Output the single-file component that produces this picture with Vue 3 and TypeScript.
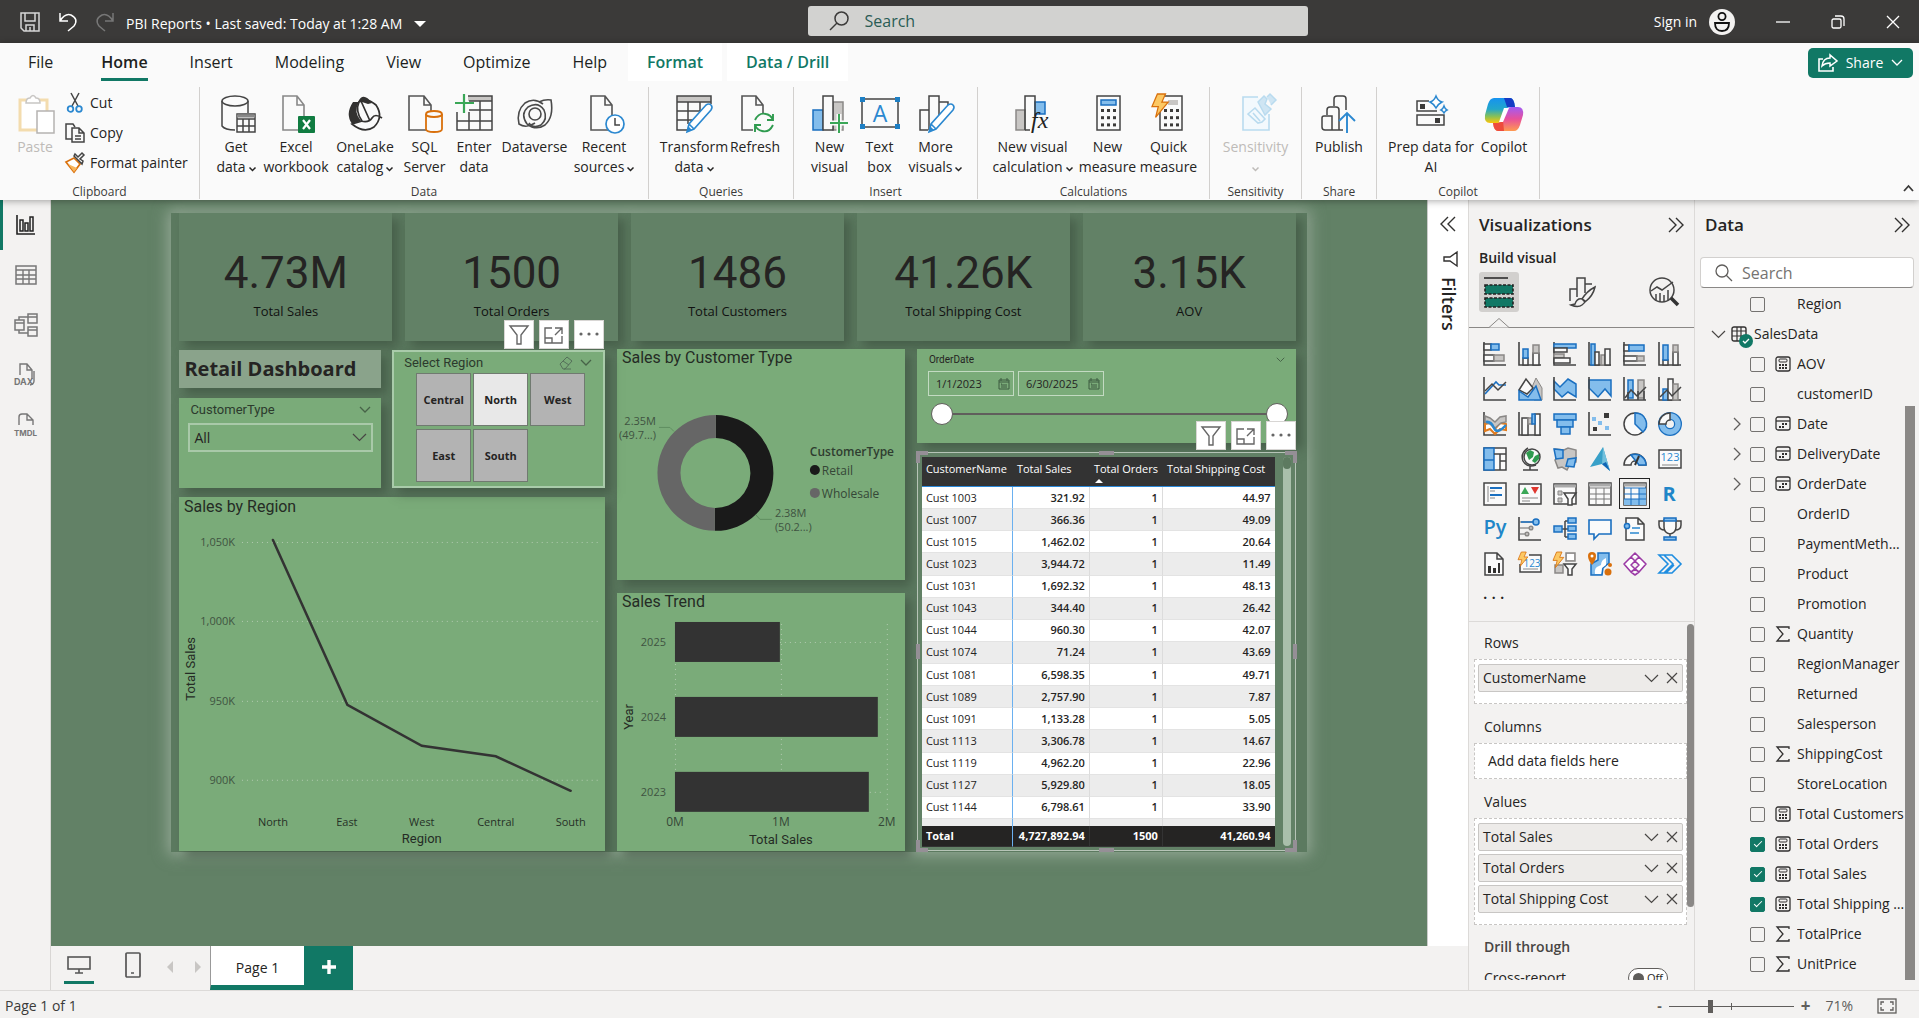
<script setup lang="ts">
import { h, ref } from 'vue'

const K = '#444'
const B = '#1a6fc0'
const L = '#83bdec'
const G = '#c8c6c4'
const axis = `<path d="M1 0v23h22" fill="none" stroke="${K}" stroke-width="1.6"/>`
const k = `fill="#fafafa" stroke="${K}" stroke-width="1.5"`
const b = `fill="${L}" stroke="${B}" stroke-width="1.5"`
const g = `fill="${G}" stroke="#8a8886" stroke-width="1.5"`
const n = `fill="none" stroke="${K}" stroke-width="1.5"`
const page = `<path d="M7 2h14l7 9v25H7z M21 2v9h7" fill="#fafafa" stroke="#555" stroke-width="1.6"/>`
const pencil = `<path d="M13 38l2-8 17-19q3-2 5 0t0 5L20 35z M15 30l5 5" fill="#fff" stroke="#2b88d0" stroke-width="1.6"/><path d="M13 38l1-6 4 4z" fill="#2b88d0"/>`
const bolt = (x: number, y: number, s: number) =>
  `<path transform="translate(${x} ${y}) scale(${s})" d="M6 0h9l-4 9h7L4 26l3-12H0z" fill="#fcc863" stroke="#d9700c" stroke-width="1.4"/>`
const calcKeys = (x: number, y: number, s: number) => {
  let out = ''
  for (let r = 0; r < 3; r++) for (let c = 0; c < 3; c++) out += `<rect x="${x + c * s * 1.5}" y="${y + r * s * 1.8}" width="${s - 1}" height="${s - 1}" fill="#3b3a39"/>`
  return out
}

type Glyph = [number, number, string]
const icons: Record<string, Glyph> = {
  save: [20, 20, `<path d="M1 1h18v18H4l-3-3z M5 1v8h10V1 M6 19v-6h8v6 M10 15v4" fill="none" stroke="#d6d6d6" stroke-width="1.5"/>`],
  undo: [18, 20, `<path d="M1 1v8h8 M1 9q5-8 11-6 8 4 3 11l-6 5" fill="none" stroke="#fff" stroke-width="1.5"/>`],
  redo: [18, 20, `<path d="M17 1v8H9 M17 9Q12 1 6 3q-8 4-3 11l6 5" fill="none" stroke="#777" stroke-width="1.5"/>`],
  caret: [12, 6, `<path d="M0 0h12L6 6z" fill="#fff"/>`],
  lens: [20, 20, `<circle cx="12.500" cy="7.500" r="6.500" fill="none" stroke="#3b3a39" stroke-width="1.5"/><path d="M8 12l-7 7" stroke="#3b3a39" stroke-width="1.5"/>`],
  lens2: [18, 18, `<circle cx="7" cy="7" r="6" fill="none" stroke="#605e5c" stroke-width="1.3"/><path d="M11 11l6 6" stroke="#605e5c" stroke-width="1.3"/>`],
  user: [26, 26, `<circle cx="13" cy="13" r="13" fill="#f3f2f1"/><circle cx="13" cy="7.500" r="3.600" fill="none" stroke="#111" stroke-width="1.800"/><path d="M6 14h14q0 8-7 8t-7-8z" fill="none" stroke="#111" stroke-width="1.800"/>`],
  min: [14, 14, `<path d="M0 7h14" stroke="#fff" stroke-width="1.300"/>`],
  restore: [14, 14, `<rect x="1" y="4" width="9" height="9" rx="1.500" fill="none" stroke="#fff" stroke-width="1.300"/><path d="M4 1h6q3 0 3 3v7" fill="none" stroke="#fff" stroke-width="1.300"/>`],
  close: [14, 14, `<path d="M1 1l12 12M13 1L1 13" stroke="#fff" stroke-width="1.300"/>`],
  share: [20, 18, `<path d="M5 5H1v12h14v-4" fill="none" stroke="#fff" stroke-width="1.600"/><path d="M4 12q1-8 8-8V1l7 6-7 5V9q-5 0-8 3z" fill="none" stroke="#fff" stroke-width="1.500"/>`],
  down: [12, 8, `<path d="M1 1l5 5 5-5" fill="none" stroke="currentColor" stroke-width="1.300"/>`],
  smalldown: [7, 5, `<path d="M.5.5l3 3 3-3" fill="none" stroke="currentColor" stroke-width="1.500"/>`],
  up: [11, 7, `<path d="M1 6l4.500-5L10 6" fill="none" stroke="#3b3a39" stroke-width="1.800"/>`],
  right: [8, 14, `<path d="M1 1l6 6-6 6" fill="none" stroke="#605e5c" stroke-width="1.300"/>`],
  wide: [15, 9, `<path d="M1 1l6.500 6.500L14 1" fill="none" stroke="#484644" stroke-width="1.200"/>`],
  x: [12, 12, `<path d="M1 1l10 10M11 1L1 11" stroke="#484644" stroke-width="1.200"/>`],
  dright: [16, 16, `<path d="M1 1l7 7-7 7M8 1l7 7-7 7" fill="none" stroke="#323130" stroke-width="1.400"/>`],
  dleft: [16, 16, `<path d="M8 1L1 8l7 7M15 1L8 8l7 7" fill="none" stroke="#323130" stroke-width="1.400"/>`],
  sidefilter: [15, 16, `<path d="M14 1v14L7 10H1V6h6z" fill="none" stroke="#323130" stroke-width="1.400"/>`],

  paste: [40, 40, `<path d="M5 6h27v30H5z" fill="#fff" stroke="#f3dcae" stroke-width="3"/><path d="M11 9q0-5 4-5 3-5 6 0 4 0 4 5z" fill="#fff" stroke="#c8c6c4" stroke-width="1.500"/><rect x="22" y="17" width="17" height="22" fill="#fff" stroke="#b5b3b1" stroke-width="1.500"/>`],
  cut: [20, 20, `<path d="M6 0l7 13M14 0L7 13" stroke="${K}" stroke-width="1.500"/><circle cx="5.500" cy="16" r="2.800" fill="none" stroke="#2b88d0" stroke-width="1.800"/><circle cx="14" cy="16" r="2.800" fill="none" stroke="#2b88d0" stroke-width="1.800"/>`],
  copy: [20, 20, `<path d="M7 16H1V1h7l2 3" ${n}/><path d="M7 5h7l5 5v9H7z M14 5v5h5 M10 13h6M10 16h6" ${k}/>`],
  painter: [20, 20, `<path d="M9 5l6 6-6 8L1 9z" fill="#fff" stroke="#d9700c" stroke-width="1.700"/><path d="M3 11l9 4-3 4z" fill="#f7b55c"/><path d="M9 3l8 8 1-3-3-2 4-4-2-2-4 4-3-3z" ${k}/>`],
  getdata: [40, 40, `<path d="M6 7v25q3 4 13 4M32 7v12" ${n}/><ellipse cx="19" cy="7" rx="13" ry="5" ${k}/><rect x="21" y="20" width="18" height="18" ${k}/><path d="M21 22h18" stroke="#888" stroke-width="3"/><path d="M21 25h18M21 32h18M27 25v13M33 25v13" ${n}/>`],
  excel: [40, 40, page.replace('#555', '#888') + `<rect x="22" y="22" width="17" height="17" rx="1" fill="#107c41"/><path d="M27 26l7 9M34 26l-7 9" stroke="#fff" stroke-width="2.200"/>`],
  onelake: [40, 40, `<path d="M8 8Q0 20 7 30l9-3Q8 18 14 8z M13 8q5-11 14 1 l-4 1-6-2z" fill="#323130"/><path d="M14 8q8-5 17 3 8 12-2 22-10 7-22-3l10-3q-7-10-3-19z M16 7l9 20 M16 27q8 2 11-3t10 0" fill="none" stroke="#323130" stroke-width="1.700"/>`],
  sql: [40, 40, `<path d="M4 2h15l7 9v25H4z M19 2v9h7" fill="#fafafa" stroke="#555" stroke-width="1.600"/><path d="M21 20v15q0 3 8 3t8-3V20" fill="#fafafa" stroke="#d9700c" stroke-width="1.800"/><ellipse cx="29" cy="20" rx="8" ry="3" fill="#fafafa" stroke="#d9700c" stroke-width="1.800"/>`],
  enter: [40, 40, `<rect x="14" y="2" width="24" height="5" fill="${G}"/><path d="M14 2h24v34H3V18 M3 27h35M15 16h23M15 7h23M15 18v18M26 7v29" ${n}/><path d="M1 9h19M10 0v19" stroke="#3aa757" stroke-width="2.200"/>`],
  dataverse: [40, 40, `<path d="M28 10q-9-7-18-1Q1 17 4 30q7 5 16-1 M12 30q9 7 18 1 9-8 6-25-6-1-12 2" fill="none" stroke="#4a4a4a" stroke-width="1.600"/><circle cx="20" cy="20" r="6" fill="none" stroke="#4a4a4a" stroke-width="1.600"/><path d="M12 30Q5 20 13 13q10-6 16 3 4 9-3 15-8 4-12-2" fill="none" stroke="#4a4a4a" stroke-width="1.600"/>`],
  recent: [40, 40, page + `<circle cx="31" cy="30" r="9" fill="#fff" stroke="#2b88d0" stroke-width="1.700"/><path d="M31 24v7h5" ${n}/>`],
  transform: [40, 40, `<rect x="3" y="2" width="34" height="6" fill="${G}"/><path d="M37 10V2H3v34h11 M3 8h34M3 17h24M3 26h16M14 8v22M26 8v9" ${n}/>` + pencil],
  refresh: [40, 40, page + `<rect x="18" y="19" width="22" height="21" fill="#fafafa"/><path d="M20 26q4-8 11-6 5 1 7 6M38 20v6h-6M38 31q-4 8-11 6-5-1-7-6M20 38v-7h6" fill="none" stroke="#2f9b4f" stroke-width="1.900"/>`],
  newvisual: [40, 40, `<rect x="3" y="16" width="10" height="20" ${b}/><rect x="23" y="8" width="10" height="28" ${g}/><rect x="13" y="2" width="10" height="34" ${k}/><path d="M20 29h18M29 20v19" stroke="#fafafa" stroke-width="5"/><path d="M20 29h18M29 20v19" stroke="#3aa757" stroke-width="2"/>`],
  textbox: [40, 40, `<rect x="2" y="5" width="36" height="28" ${n}/><g fill="#1e7fc4"><rect y="3" width="5" height="5"/><rect x="35" y="3" width="5" height="5"/><rect y="30" width="5" height="5"/><rect x="35" y="30" width="5" height="5"/></g><text x="20" y="28" text-anchor="middle" font-size="23" font-family="Open Sans, sans-serif" fill="#2b88d0">A</text>`],
  morevisuals: [40, 40, `<path d="M12 36H4V16h9" ${n}/><path d="M23 8h9v6" ${n}/><path d="M13 36V2h10v24" ${n}/>` + pencil],
  calcvisual: [40, 40, `<rect x="3" y="16" width="9" height="20" ${g}/><rect x="22" y="8" width="10" height="12" ${b}/><path d="M12 36V2h10v20" ${n}/><path d="M12 36h5" ${n}/><text x="18" y="34" font-size="24" font-style="italic" font-family="Liberation Serif, serif" fill="#222">fx</text>`],
  measure: [40, 40, `<rect x="9" y="2" width="23" height="34" ${k}/><rect x="13" y="6" width="15" height="5" ${b}/>` + calcKeys(13, 15, 4)],
  quick: [40, 40, `<rect x="11" y="2" width="22" height="34" ${k}/><rect x="19" y="6" width="10" height="5" fill="${G}"/>` + calcKeys(15, 15, 4) + bolt(3, 0, 0.9)],
  sensitivity: [40, 40, `<path d="M22 3H7v33h26V20" fill="#f3f9fd" stroke="#b9dbef" stroke-width="1.600"/><path d="M12 20l7-6 10 11-3 3-4 1z M17 19l7 8" fill="none" stroke="#b9dbef" stroke-width="1.600"/><path d="M22 8l6-6 3 3-2 5 6 5-6 6zM31 3l3-3 6 6-5 5" fill="#cfe5f3" stroke="#b9dbef" stroke-width="1.500"/>`],
  publish: [40, 40, `<path d="M15 36h-9q-3 0-3-3V24q0-2 2-2h8v14 M8 21v-5q0-3 3-3h6q3 0 3 3v20h-6 M15 12V5q0-3 3-3h6q3 0 3 3v11 M20 30v6h4" ${n}/><path d="M28 39V20M20 27l8-8 8 8" fill="none" stroke="#2b88d0" stroke-width="1.900"/>`],
  prep: [40, 40, `<path d="M18 7H6v10h20 M6 21h27v10H6z" ${n}/><rect x="9" y="10" width="5" height="5" fill="#3b3a39"/><rect x="24" y="24" width="5" height="5" fill="#3b3a39"/><path d="M25 2q2 5 6 6-4 2-6 6-2-4-6-6 4-1 6-6z M33 12q1 3 3 4-2 1-3 3-1-2-3-3 2-1 3-4z" fill="#fff" stroke="#2b88d0" stroke-width="1.500"/>`],
  copilot: [40, 40, `<defs><linearGradient id="ca" x1="0" y1="0" x2="0" y2="1"><stop offset="0" stop-color="#1692f0"/><stop offset=".45" stop-color="#23a7c9"/><stop offset=".75" stop-color="#8cc152"/><stop offset="1" stop-color="#fdc50a"/></linearGradient><linearGradient id="cb" x1="0" y1="0" x2="0" y2="1"><stop offset="0" stop-color="#a15bf5"/><stop offset=".5" stop-color="#e8509a"/><stop offset="1" stop-color="#ff9a4f"/></linearGradient></defs><path d="M10 4h16q4 0 5 9h-5q-4 0-6 7l-2 7q-1 2-4 2H6q-6 0-5-8L4 10q2-6 6-6z" fill="url(#ca)"/><path d="M20 4h6q4 0 5 9h-8z" fill="#153bc4"/><path d="M30 37H14q-4 0-5-8h5q4 0 6-7l3-7q1-2 4-2h7q6 0 5 8l-3 10q-2 6-6 6z" fill="url(#cb)"/><path d="M20 37h-6q-4 0-5-8h5q3 0 5-3z" fill="#ee4c3c"/><path d="M20 14h5l-6 14h-4z" fill="#fff"/>`],

  report: [20, 20, `<path d="M1 0v19h18" fill="none" stroke="#222" stroke-width="1.600"/><path d="M4 5h3v11H4zM9 8h3v8H9zM14 2h3v14h-3z" fill="none" stroke="#222" stroke-width="1.500"/>`],
  table: [22, 20, `<rect x="1" y="1" width="20" height="18" fill="none" stroke="#777" stroke-width="1.500"/><path d="M1 5h20M1 10h20M1 14h20M8 5v14M14 5v14" stroke="#777" stroke-width="1.400"/>`],
  model: [24, 24, `<path d="M14 1h9v9h-9zM14 14h9v9h-9zM1 7h9v10H1z M14 4h9M14 17h9M1 10h9 M5 7V4h9 M5 17v3h9" fill="none" stroke="#777" stroke-width="1.500"/>`],
  dax: [24, 24, `<path d="M6 12V1h7l5 6v9 M13 1v6h5 M20 8v10q0 3-4 4" fill="none" stroke="#777" stroke-width="1.400"/><text x="0" y="22" font-size="9" font-weight="700" font-family="Inter, sans-serif" fill="#777">DAX</text>`],
  tmdl: [24, 24, `<path d="M5 12V4q0-3 3-3h5l6 6v5 M13 1v6h6" fill="none" stroke="#777" stroke-width="1.400"/><text x="0" y="23" font-size="8" font-weight="700" font-family="Inter, sans-serif" fill="#777">TMDL</text>`],
  funnelbtn: [20, 20, `<path d="M1 1h18L12 10v9H8v-9z" fill="none" stroke="#666" stroke-width="1.400"/>`],
  focus: [20, 20, `<path d="M8 3H1v15h17v-7 M1 13h7v5 M11 3h7v6 M18 3l-7 7" fill="none" stroke="#666" stroke-width="1.400"/>`],
  dots: [20, 20, `<g fill="#666"><circle cx="2" cy="9" r="1.600"/><circle cx="10" cy="9" r="1.600"/><circle cx="18" cy="9" r="1.600"/></g>`],
  eraser: [14, 14, `<path d="M1 8l7-7 5 4-7 8H4z M4 5l6 4 M5 13h7" fill="none" stroke="#55705a" stroke-width="1"/>`],
  cal: [12, 12, `<path d="M1 2h10v9H1zM1 4h10M3 0v3M9 0v3" fill="none" stroke="#3d5a41" stroke-width="1"/><path d="M3 6h1v4M6 6v4M8 6v4" fill="none" stroke="#3d5a41"/>`],

  build: [32, 32, `<path d="M1 2h24" stroke="#222" stroke-width="1.500"/><rect x="2" y="9" width="28" height="9" fill="#117865" stroke="#222" stroke-width="1.600" stroke-dasharray="3 1.500"/><rect x="2" y="22" width="28" height="9" fill="#117865" stroke="#222" stroke-width="1.600" stroke-dasharray="3 1.500"/>`],
  brush: [28, 32, `<path d="M2 25V13h7M9 21V2h8v15M17 8h7" ${n}/><path d="M27 11q-8 4-13 12l3 3q8-6 10-15z M14 23q-5-1-7 5l-4 1q7 3 11 0 3-2 3-4z" fill="#f3f2f1" stroke="${K}" stroke-width="1.500"/>`],
  analytics: [32, 32, `<circle cx="14" cy="14" r="12" ${n}/><path d="M3 15l6-4 5 3 11-8M8 25v-7M12 26v-9M16 26v-7M20 24V14" ${n}/><path d="M23 22l7 7" stroke="#333" stroke-width="3.500"/>`],

  v1: [24, 24, axis + `<rect x="1" y="2" width="7" height="6" ${k}/><rect x="8" y="2" width="8" height="6" ${b}/><rect x="1" y="13" width="10" height="6" ${k}/><rect x="11" y="13" width="10" height="6" ${g}/>`],
  v2: [24, 24, axis + `<rect x="5" y="16" width="5" height="7" ${k}/><rect x="5" y="7" width="5" height="9" ${b}/><rect x="15" y="11" width="6" height="12" ${k}/><rect x="15" y="3" width="6" height="8" ${g}/>`],
  v3: [24, 24, axis + `<rect x="1" y="2" width="22" height="4" ${b}/><rect x="1" y="6" width="13" height="4" ${k}/><rect x="1" y="12" width="10" height="4" ${g}/><rect x="1" y="16" width="16" height="5" ${k}/>`],
  v4: [24, 24, axis + `<rect x="3" y="2" width="4" height="21" ${b}/><rect x="7" y="10" width="4" height="13" ${k}/><rect x="13" y="13" width="4" height="10" ${g}/><rect x="17" y="7" width="5" height="16" ${k}/>`],
  v5: [24, 24, axis + `<rect x="1" y="3" width="5" height="6" ${k}/><rect x="6" y="3" width="15" height="6" ${b}/><rect x="1" y="14" width="13" height="5" ${k}/><rect x="14" y="14" width="7" height="5" ${g}/>`],
  v6: [24, 24, axis + `<rect x="5" y="18" width="5" height="5" ${k}/><rect x="5" y="3" width="5" height="15" ${b}/><rect x="15" y="10" width="5" height="13" ${k}/><rect x="15" y="3" width="5" height="7" ${g}/>`],
  v7: [24, 24, axis + `<path d="M2 17L13 5l3 3h7" fill="none" stroke="${B}" stroke-width="1.600"/><path d="M2 14l7-7 6 6 8-8" ${n}/>`],
  v8: [24, 24, `<path d="M14 10l4-9 6 10v12h-8z" fill="${G}" stroke="#8a8886"/><path d="M1 13L8 2l7 9-6 6z" ${k}/><path d="M1 14l9 6 8-11 5 14H1z" ${b}/>`],
  v9: [24, 24, `<path d="M1 4l6 6 8-8 8 5v13l-8-5-6 5-8-8z" ${b}/>` + axis],
  v10: [24, 24, `<path d="M1 3h22v16l-6-7-7 8-9-9z" ${b}/>` + axis],
  v11: [24, 24, axis + `<rect x="5" y="3" width="5" height="18" ${b}/><rect x="15" y="3" width="6" height="18" ${g}/><path d="M5 23v-8M15 23v-9M21 23v-9" ${n}/><path d="M2 21l6-8 6 6 9-9" ${n}/>`],
  v12: [24, 24, axis + `<rect x="5" y="12" width="5" height="11" ${b}/><rect x="10" y="2" width="5" height="21" ${k}/><rect x="15" y="7" width="5" height="16" ${g}/><path d="M2 20l7-7 5 6 9-9" ${n}/>`],
  v13: [24, 24, axis + `<path d="M2 12l5-1 5 6 5-6 6 1v6l-6-1-5 5-5-5-5 2z" fill="#fff" stroke="#e07a1c" stroke-width="2"/><path d="M2 4l5 2 5 4 5-5 6-1v6l-5 1-6 5-5-4-5-2z" ${g}/><path d="M3 10q5-1 8 6t12-3" fill="none" stroke="#2b88d0" stroke-width="2.500"/>`],
  v14: [24, 24, axis + `<path d="M4 6h6v17H4zM17 2h5v21h-5z" ${k}/><rect x="10" y="6" width="4" height="6" ${g}/><rect x="14" y="2" width="3" height="10" ${b}/>`],
  v15: [24, 24, `<rect x="1" y="2" width="22" height="6" ${b}/><rect x="4" y="8" width="16" height="7" ${b}/><rect x="8" y="15" width="9" height="7" ${b}/>`],
  v16: [24, 24, axis + `<path d="M16 1h5v5h-5zM5 15h4v4H5z" fill="#3b3a39"/><path d="M4 5h4v4H4zM10 9h4v4h-4zM17 14h4v4h-4z" fill="${L}"/>`],
  v17: [24, 24, `<circle cx="12" cy="12" r="11" ${k}/><path d="M12 12V1a11 11 0 0 1 8 19z" ${b}/>`],
  v18: [24, 24, `<circle cx="12" cy="12" r="8" fill="none" stroke="${B}" stroke-width="8"/><circle cx="12" cy="12" r="8" fill="none" stroke="${L}" stroke-width="5.500"/><path d="M1 12A11 11 0 0 1 12 1v7a4 4 0 0 0-4 4z" ${k}/>`],
  v19: [24, 24, `<rect x="1" y="1" width="22" height="22" ${k}/><path d="M1 1h10v22H1zM1 13h10" ${b}/><path d="M11 7h12M17 7v16M17 14h6" ${n}/>`],
  v20: [24, 24, `<circle cx="14" cy="10" r="8" ${k}/><path d="M8 6l4-3 4 2-1 5-4 3zM17 9l4-2v5l-4 4-3-2z" fill="#2f9b4f"/><path d="M10 1Q2 6 5 14q4 7 13 4M12 19v4M5 23h15" ${n}/>`],
  v21: [24, 24, `<path d="M2 2l9 1 4-2 8 2v12l-6 2-3 6-5-3-4 1-3-8 2-3z" ${g}/><path d="M1 2l9 1v8l-7 1zM15 12l8-1-2 9-8-1z" ${b}/>`],
  v22: [24, 24, `<path d="M15 0l7 24-8-7-12 3z" fill="#38a0c8"/><path d="M15 0l7 24-8-7z" fill="#72c0dc"/><path d="M14 17l8 7-4-9z" fill="#1065b5"/>`],
  v23: [24, 24, `<path d="M1 18A11 11 0 0 1 23 18h-7a4 4 0 0 0-8 0z" ${k}/><path d="M8 8a11 11 0 0 1 15 10h-7z" ${b}/><path d="M12 18l4-9" stroke="#333" stroke-width="2"/>`],
  v24: [24, 24, `<rect x="1" y="3" width="22" height="18" ${k}/><text x="12" y="14" text-anchor="middle" font-size="11" font-family="Open Sans, sans-serif" fill="#2b88d0">123</text><path d="M4 18h16" stroke="#888"/>`],
  v25: [24, 24, `<rect x="1" y="1" width="22" height="22" ${k}/><path d="M5 4v16" stroke="#888"/><path d="M7 6h12M7 13h12" stroke="${B}" stroke-width="2"/><path d="M7 9h5M7 16h5" stroke="#888"/>`],
  v26: [24, 24, `<rect x="1" y="2" width="22" height="20" ${k}/><path d="M3 12l4-7 4 7z" fill="#3aa757"/><path d="M13 5h8l-4 7z" fill="#e0372f"/><path d="M4 16h16M4 19h8" stroke="#888"/>`],
  v27: [24, 24, `<path d="M1 2h22v20H1z" ${k}/><path d="M1 4h22" stroke="#aaa" stroke-width="3"/><path d="M5 9h4v4H5zM5 16h4v4H5z" fill="${G}" stroke="#888"/><path d="M11 11h12l-4 6v6h-4v-6z" ${k}/>`],
  v28: [24, 24, `<rect x="1" y="1" width="22" height="22" ${k}/><path d="M1 3h22" stroke="#aaa" stroke-width="3"/><path d="M1 6h22M1 12h22M1 17h22M8 6v17M16 6v17" stroke="#777"/>`],
  v29: [24, 24, `<rect x="1" y="1" width="22" height="22" ${k}/><path d="M1 3h22" stroke="#aaa" stroke-width="3"/><path d="M16 6h7v17H1v-6h15z" fill="${L}"/><path d="M1 6h22M1 12h22M1 17h22M8 6v17M16 6v17" stroke="${B}"/>`],
  v30: [24, 24, `<text x="11" y="19" text-anchor="middle" font-size="20" font-weight="700" font-family="Open Sans, sans-serif" fill="#2086c8">R</text>`],
  v31: [24, 24, `<text x="12" y="17" text-anchor="middle" font-size="20" font-weight="600" font-family="Open Sans, sans-serif" fill="#2086c8">Py</text>`],
  v32: [24, 24, axis + `<path d="M1 5h14M1 11h10M1 17h7" stroke="#666"/><path d="M3 5h13" stroke="${B}" stroke-width="1.500"/><circle cx="18" cy="5" r="3" ${b}/><circle cx="13" cy="11" r="1.800" ${g}/><circle cx="9" cy="17" r="1.800" ${g}/>`],
  v33: [24, 24, `<path d="M9 12h6M12 4h3M12 20h3M12 4v16" ${n}/><path d="M1 9h8v6H1zM15 1h8v5h-8zM15 9h8v5h-8zM15 17h8v5h-8z" ${b}/>`],
  v34: [24, 24, `<path d="M1 3h22v14H11l-5 5v-5H1z" fill="#fafafa" stroke="${B}" stroke-width="1.600"/>`],
  v35: [24, 24, `<path d="M3 6V1h12l6 6v16H3V12 M15 1v6h6" ${k}/><circle cx="4" cy="9" r="2.600" ${b}/><path d="M9 11h8M7 16h9" stroke="#2b88d0" stroke-width="1.500"/>`],
  v36: [24, 24, `<path d="M6 4H1v4q0 5 6 5M18 4h5v4q0 5-6 5" ${n}/><path d="M6 3h12v7q0 6-6 7-6-1-6-7zM12 17v4" ${k}/><path d="M6 1h12v3H6zM6 20h12v3H6z" ${b}/>`],
  v37: [24, 24, `<path d="M2 1h12l6 6v16H2z M14 1v6h6" ${k}/><path d="M5 14h3v7H5zM10 16h3v5h-3zM15 11h2v10h-2z" fill="#323130"/>`],
  v38: [24, 24, `<path d="M11 3h12v17H2v-8" ${k}/><text x="14" y="15" text-anchor="middle" font-size="10" font-family="Open Sans, sans-serif" fill="#2b88d0">123</text><path d="M5 17h15" stroke="#888"/>` + bolt(0, 0, 0.55)],
  v39: [24, 24, `<path d="M13 1h9v8h-9zM2 13h8v8H2z" ${g}/><path d="M14 2h7v6h-7z" fill="#fff"/><path d="M11 12h12l-4 5v6h-4v-6z" ${k}/>` + bolt(0, 0, 0.6)],
  v40: [24, 24, `<path d="M3 12v11h11l1-7 6-5V1H10v7z" ${b}/><path d="M11 14q-5 1-4 8h6l1-6 4-3V6q-5 2-5 7z" fill="#fff"/><path d="M0 4q0-4 4-4t4 4q0 4-4 9-4-5-4-9z" fill="#d9700c"/><circle cx="4" cy="4" r="1.500" fill="#fff"/><circle cx="20" cy="20" r="3.500" fill="#d9700c"/><circle cx="22" cy="13" r="2" fill="#d9700c"/>`],
  v41: [24, 24, `<path d="M8 5l4-4 4 4 M1 12l7-7 4 4-4 4 4 4-4 3z M23 12l-7-7-4 4 4 4-4 4 4 3z M8 20l4 3 4-3" fill="#fff" stroke="#9b3aa5" stroke-width="1.600" stroke-linejoin="round"/>`],
  v42: [24, 24, `<path d="M1 3h13l9 9-9 9H1l9-9zM6 3l9 9-9 9M14 21H8l8-8" fill="none" stroke="#1e8de0" stroke-width="1.600"/>`],

  calc: [16, 16, `<rect x="1" y="1" width="14" height="14" rx="2" fill="none" stroke="#323130" stroke-width="1.300"/><rect x="4" y="3" width="8" height="3" rx="1" fill="none" stroke="#323130"/><g fill="#323130"><path d="M4 8h2v2H4zM7 8h2v2H7zM10 8h2v2h-2zM4 11h2v2H4zM7 11h2v2H7zM10 11h2v2h-2z"/></g>`],
  date: [16, 16, `<rect x="1" y="1" width="14" height="13" rx="2" fill="none" stroke="#323130" stroke-width="1.300"/><path d="M1 5h14" stroke="#323130" stroke-width="1.300"/><path d="M7 7h2v2H7zM10 7h2v2h-2zM4 10h2v2H4zM7 10h2v2H7z" fill="#323130"/>`],
  sum: [16, 16, `<path d="M14 3V1H2l6 7-6 7h12v-2" fill="none" stroke="#323130" stroke-width="1.300"/>`],
  tablecheck: [22, 22, `<rect x="1" y="1" width="14" height="14" rx="2" fill="none" stroke="#323130" stroke-width="1.400"/><path d="M1 5h14M1 10h14M6 1v14M10 1v14" stroke="#323130" stroke-width="1.200"/><circle cx="15" cy="15" r="7" fill="#117865"/><path d="M12 15l2 2 4-4" fill="none" stroke="#fff" stroke-width="1.300"/>`],
  monitor: [24, 18, `<rect x="1" y="1" width="22" height="12" fill="none" stroke="#555" stroke-width="1.600"/><path d="M12 13v4M8 17h8" stroke="#555" stroke-width="1.600"/>`],
  phone: [16, 26, `<rect x="1" y="1" width="14" height="24" rx="1" fill="none" stroke="#555" stroke-width="1.700"/><path d="M6 21h3" stroke="#555" stroke-width="1.500"/>`],
  prev: [6, 12, `<path d="M6 0v12L0 6z" fill="#c8c6c4"/>`],
  next: [6, 12, `<path d="M0 0v12l6-6z" fill="#c8c6c4"/>`],
  plus: [14, 14, `<path d="M7 0v14M0 7h14" stroke="#fff" stroke-width="3.400"/>`],
  fit: [20, 16, `<rect x="1" y="1" width="18" height="14" fill="none" stroke="#605e5c" stroke-width="1.300"/><path d="M4 7V4h3M13 4h3v3M16 9v3h-3M7 12H4V9" fill="none" stroke="#605e5c" stroke-width="1.300"/>`],
}

const Ico = (p: { n: string }) => {
  const [w, ht, body] = icons[p.n]
  return h('svg', { width: w, height: ht, viewBox: `0 0 ${w} ${ht}`, 'aria-hidden': 'true', innerHTML: body })
}
Ico.props = ['n']

interface Cmd { icon: string; lines: string[]; w: number; menu?: boolean; off?: boolean }
interface Group { name: string; w: number; items: Cmd[] }
const tabs = ['File', 'Home', 'Insert', 'Modeling', 'View', 'Optimize', 'Help']
const groups: Group[] = [
  { name: 'Data', w: 449, items: [
    { icon: 'getdata', lines: ['Get', 'data'], w: 60, menu: true },
    { icon: 'excel', lines: ['Excel', 'workbook'], w: 60 },
    { icon: 'onelake', lines: ['OneLake', 'catalog'], w: 78, menu: true },
    { icon: 'sql', lines: ['SQL', 'Server'], w: 41 },
    { icon: 'enter', lines: ['Enter', 'data'], w: 58 },
    { icon: 'dataverse', lines: ['Dataverse'], w: 63 },
    { icon: 'recent', lines: ['Recent', 'sources'], w: 76, menu: true },
  ] },
  { name: 'Queries', w: 145, items: [
    { icon: 'transform', lines: ['Transform', 'data'], w: 68, menu: true },
    { icon: 'refresh', lines: ['Refresh'], w: 54 },
  ] },
  { name: 'Insert', w: 184, items: [
    { icon: 'newvisual', lines: ['New', 'visual'], w: 54 },
    { icon: 'textbox', lines: ['Text', 'box'], w: 46 },
    { icon: 'morevisuals', lines: ['More', 'visuals'], w: 66, menu: true },
  ] },
  { name: 'Calculations', w: 232, items: [
    { icon: 'calcvisual', lines: ['New visual', 'calculation'], w: 88, menu: true },
    { icon: 'measure', lines: ['New', 'measure'], w: 62 },
    { icon: 'quick', lines: ['Quick', 'measure'], w: 60 },
  ] },
  { name: 'Sensitivity', w: 92, items: [{ icon: 'sensitivity', lines: ['Sensitivity', ''], w: 80, menu: true, off: true }] },
  { name: 'Share', w: 75, items: [{ icon: 'publish', lines: ['Publish'], w: 60 }] },
  { name: 'Copilot', w: 163, items: [
    { icon: 'prep', lines: ['Prep data for', 'AI'], w: 92 },
    { icon: 'copilot', lines: ['Copilot'], w: 54 },
  ] },
]

const kpis = [
  ['4.73M', 'Total Sales'], ['1500', 'Total Orders'], ['1486', 'Total Customers'],
  ['41.26K', 'Total Shipping Cost'], ['3.15K', 'AOV'],
]
const regions = ['Central', 'North', 'West', 'East', 'South']
const region = ref('North')
const trend = [
  { y: 29, w: 105, label: '2025' },
  { y: 104, w: 203, label: '2024' },
  { y: 179, w: 194, label: '2023' },
]
const rows = [
  ['Cust 1003', '321.92', '1', '44.97'], ['Cust 1007', '366.36', '1', '49.09'],
  ['Cust 1015', '1,462.02', '1', '20.64'], ['Cust 1023', '3,944.72', '1', '11.49'],
  ['Cust 1031', '1,692.32', '1', '48.13'], ['Cust 1043', '344.40', '1', '26.42'],
  ['Cust 1044', '960.30', '1', '42.07'], ['Cust 1074', '71.24', '1', '43.69'],
  ['Cust 1081', '6,598.35', '1', '49.71'], ['Cust 1089', '2,757.90', '1', '7.87'],
  ['Cust 1091', '1,133.28', '1', '5.05'], ['Cust 1113', '3,306.78', '1', '14.67'],
  ['Cust 1119', '4,962.20', '1', '22.96'], ['Cust 1127', '5,929.80', '1', '18.05'],
  ['Cust 1144', '6,798.61', '1', '33.90'],
]
const handles = ['tl', 'tm', 'tr', 'ml', 'mr', 'bl', 'bm', 'br']
const visuals = Array.from({ length: 42 }, (_, i) => `v${i + 1}`)
const values = ['Total Sales', 'Total Orders', 'Total Shipping Cost']

interface Field { name: string; icon?: string; open?: boolean; on?: boolean }
const fields: Field[] = [
  { name: 'AOV', icon: 'calc' }, { name: 'customerID' },
  { name: 'Date', icon: 'date', open: true }, { name: 'DeliveryDate', icon: 'date', open: true },
  { name: 'OrderDate', icon: 'date', open: true }, { name: 'OrderID' }, { name: 'PaymentMethod' },
  { name: 'Product' }, { name: 'Promotion' }, { name: 'Quantity', icon: 'sum' },
  { name: 'RegionManager' }, { name: 'Returned' }, { name: 'Salesperson' },
  { name: 'ShippingCost', icon: 'sum' }, { name: 'StoreLocation' },
  { name: 'Total Customers', icon: 'calc' }, { name: 'Total Orders', icon: 'calc', on: true },
  { name: 'Total Sales', icon: 'calc', on: true }, { name: 'Total Shipping Cost', icon: 'calc', on: true },
  { name: 'TotalPrice', icon: 'sum' }, { name: 'UnitPrice', icon: 'sum' },
]
</script>

<template>
  <div class="app">
    <header class="titlebar">
      <button class="bare" aria-label="Save"><Ico n="save" /></button>
      <button class="bare" aria-label="Undo"><Ico n="undo" /></button>
      <button class="bare" aria-label="Redo"><Ico n="redo" /></button>
      <button class="bare doc">PBI Reports • Last saved: Today at 1:28 AM <Ico n="caret" /></button>
      <label class="topsearch"><Ico n="lens" /><input type="text" placeholder="Search" aria-label="Search" /></label>
      <div class="winctl">
        <button class="bare signin">Sign in <Ico n="user" /></button>
        <button class="bare" aria-label="Minimize"><Ico n="min" /></button>
        <button class="bare" aria-label="Restore"><Ico n="restore" /></button>
        <button class="bare" aria-label="Close"><Ico n="close" /></button>
      </div>
    </header>

    <section class="ribbon">
      <nav class="tabs">
        <button v-for="t in tabs" :key="t" class="tab" :class="{ active: t === 'Home' }"><span>{{ t }}</span></button>
        <button class="tab ctx">Format</button>
        <button class="tab ctx">Data / Drill</button>
        <button class="share"><Ico n="share" />Share<Ico n="down" /></button>
      </nav>
      <div class="groups">
        <div class="group clip">
          <div class="cmds">
            <button class="cmd off"><Ico n="paste" /><span>Paste</span></button>
            <div class="stack">
              <button><Ico n="cut" />Cut</button>
              <button><Ico n="copy" />Copy</button>
              <button><Ico n="painter" />Format painter</button>
            </div>
          </div>
          <div class="gname">Clipboard</div>
        </div>
        <div v-for="gr in groups" :key="gr.name" class="group" :style="{ width: gr.w + 'px' }">
          <div class="cmds">
            <button v-for="c in gr.items" :key="c.icon" class="cmd" :class="{ off: c.off }" :style="{ width: c.w + 'px' }">
              <Ico :n="c.icon" />
              <span v-for="(l, i) in c.lines" :key="i">{{ l }}<Ico v-if="c.menu && i === 1" n="smalldown" class="sd" /></span>
            </button>
          </div>
          <div class="gname">{{ gr.name }}</div>
        </div>
        <button class="bare collapse" aria-label="Collapse ribbon"><Ico n="up" /></button>
      </div>
    </section>

    <main class="main">
      <nav class="rail">
        <button class="active" aria-label="Report view"><Ico n="report" /></button>
        <button aria-label="Table view"><Ico n="table" /></button>
        <button aria-label="Model view"><Ico n="model" /></button>
        <button aria-label="DAX query view"><Ico n="dax" /></button>
        <button aria-label="TMDL view"><Ico n="tmdl" /></button>
      </nav>

      <div class="center">
        <div class="work">
          <div class="canvas">
            <div class="report">
              <div class="kpis">
                <article v-for="c in kpis" :key="c[1]" class="kpi">
                  <strong>{{ c[0] }}</strong><span>{{ c[1] }}</span>
                </article>
              </div>
              <div class="body">
                <div class="colA">
                  <div class="duo">
                    <div class="narrow">
                      <h1 class="headline">Retail Dashboard</h1>
                      <section class="tile slicer">
                        <div class="shead"><label for="ctype">CustomerType</label><Ico n="down" /></div>
                        <div class="dd"><select id="ctype"><option>All</option></select><Ico n="wide" /></div>
                      </section>
                    </div>
                    <section class="tile regionbox">
                      <div class="vhead">
                        <button aria-label="Filters"><Ico n="funnelbtn" /></button>
                        <button aria-label="Focus mode"><Ico n="focus" /></button>
                        <button aria-label="More options"><Ico n="dots" /></button>
                      </div>
                      <div class="shead"><span>Select Region</span><i><Ico n="eraser" /><Ico n="down" /></i></div>
                      <div class="chips">
                        <button v-for="r in regions" :key="r" :class="{ on: r === region }" @click="region = r">{{ r }}</button>
                      </div>
                    </section>
                  </div>
                  <section class="tile fill">
                    <svg viewBox="0 0 426 353" class="chart">
                      <text x="5" y="15" class="vt">Sales by Region</text>
                      <g class="grid">
                        <path d="M63 45.500H420M63 124.500H420M63 204.500H420M63 283.500H420" />
                      </g>
                      <g class="ax" text-anchor="end">
                        <text x="56" y="49">1,050K</text><text x="56" y="128">1,000K</text>
                        <text x="56" y="208">950K</text><text x="56" y="287">900K</text>
                      </g>
                      <g class="ax dark" text-anchor="middle">
                        <text x="94" y="329">North</text><text x="168" y="329">East</text><text x="243" y="329">West</text>
                        <text x="317" y="329">Central</text><text x="392" y="329">South</text>
                      </g>
                      <text x="243" y="346" class="at">Region</text>
                      <text transform="translate(16 172) rotate(-90)" class="at">Total Sales</text>
                      <path d="M94 43L168.500 208 243 249 317 259.500 392 294" class="trendline" />
                    </svg>
                  </section>
                </div>

                <div class="colB">
                  <section class="tile">
                    <svg viewBox="0 0 288 231" class="chart">
                      <text x="5" y="14" class="vt">Sales by Customer Type</text>
                      <path d="M99 66a58 58 0 0 1-1 116v-23a35 35 0 0 0 1-70z" fill="#1a1a1a" />
                      <path d="M99 66a58 58 0 0 0-1 116v-23a35 35 0 0 1 1-70z" fill="#666" />
                      <path d="M42 78.500h11l4 4M139 166l4 4.500h12" fill="none" stroke="#5f8f60" />
                      <g class="ax"><text x="39" y="76" text-anchor="end">2.35M</text><text x="39" y="90" text-anchor="end">(49.7...)</text>
                        <text x="158" y="168">2.38M</text><text x="158" y="182">(50.2...)</text></g>
                      <text x="193" y="107" class="lt">CustomerType</text>
                      <circle cx="198" cy="121" r="5" fill="#1a1a1a" /><circle cx="198" cy="144" r="5" fill="#666" />
                      <g class="lg"><text x="205" y="126">Retail</text><text x="205" y="149">Wholesale</text></g>
                    </svg>
                  </section>
                  <section class="tile fill">
                    <svg viewBox="0 0 288 258" class="chart">
                      <text x="5" y="14" class="vt">Sales Trend</text>
                      <g class="grid"><path d="M58.500 31V219M164.500 31V219M270.500 31V219M58 49.500H268M58 124.500H268M58 199.500H268" /></g>
                      <g v-for="t in trend" :key="t.label" class="ax">
                        <rect x="58" :y="t.y" :width="t.w" height="40" fill="#333" />
                        <text x="49" :y="t.y + 24" text-anchor="end">{{ t.label }}</text>
                      </g>
                      <g class="lg" text-anchor="middle"><text x="58" y="233">0M</text><text x="164" y="233">1M</text><text x="270" y="233">2M</text></g>
                      <text x="164" y="251" class="at">Total Sales</text>
                      <text transform="translate(16 124) rotate(-90)" class="at">Year</text>
                    </svg>
                  </section>
                </div>

                <div class="colC">
                  <section class="tile dates">
                    <div class="dhead"><span>OrderDate</span><Ico n="down" /></div>
                    <div class="drow">
                      <label><input type="text" value="1/1/2023" aria-label="Start date" /><Ico n="cal" /></label>
                      <label><input type="text" value="6/30/2025" aria-label="End date" /><Ico n="cal" /></label>
                    </div>
                    <div class="range">
                      <input type="range" min="0" max="100" value="0" aria-label="Range start" />
                      <input type="range" min="0" max="100" value="100" aria-label="Range end" />
                    </div>
                  </section>
                  <section class="matrix">
                    <i v-for="p in handles" :key="p" class="handle" :class="p"></i>
                    <div class="vhead">
                      <button aria-label="Filters"><Ico n="funnelbtn" /></button>
                      <button aria-label="Focus mode"><Ico n="focus" /></button>
                      <button aria-label="More options"><Ico n="dots" /></button>
                    </div>
                    <table>
                      <colgroup><col class="c1" /><col class="c2" /><col class="c3" /><col /></colgroup>
                      <thead><tr><th>CustomerName</th><th>Total Sales</th><th class="sorted">Total Orders</th><th>Total Shipping Cost</th></tr></thead>
                      <tbody>
                        <tr v-for="r in rows" :key="r[0]"><td v-for="(c, i) in r" :key="i">{{ c }}</td></tr>
                        <tr class="cutrow"><td></td><td></td><td></td><td></td></tr>
                      </tbody>
                      <tfoot><tr><td>Total</td><td>4,727,892.94</td><td>1500</td><td>41,260.94</td></tr></tfoot>
                    </table>
                    <div class="mscroll"><i></i></div>
                  </section>
                </div>
              </div>
            </div>
          </div>

          <aside class="filters">
            <button class="bare" aria-label="Expand filters"><Ico n="dleft" /></button>
            <Ico n="sidefilter" />
            <h2>Filters</h2>
          </aside>
        </div>
        <footer class="pages">
          <button class="bare view on" aria-label="Desktop layout"><Ico n="monitor" /></button>
          <button class="bare phone" aria-label="Mobile layout"><Ico n="phone" /></button>
          <button class="bare arrow" aria-label="Previous page"><Ico n="prev" /></button>
          <button class="bare arrow" aria-label="Next page"><Ico n="next" /></button>
          <button class="ptab">Page 1</button>
          <button class="padd" aria-label="New page"><Ico n="plus" /></button>
        </footer>
      </div>

      <aside class="viz">
        <div class="phead"><h2>Visualizations</h2><button class="bare" aria-label="Collapse"><Ico n="dright" /></button></div>
        <h3>Build visual</h3>
        <div class="modes">
          <button class="on" aria-label="Build visual"><Ico n="build" /></button>
          <button aria-label="Format visual"><Ico n="brush" /></button>
          <button aria-label="Analytics"><Ico n="analytics" /></button>
        </div>
        <div class="notch"><svg width="20" height="10" viewBox="0 0 20 10"><path d="M0 9.500L10 .5l10 9" fill="#f3f2f1" stroke="#8a8886" /></svg></div>
        <div class="gallery">
          <button v-for="v in visuals" :key="v" :class="{ on: v === 'v29' }" :aria-label="v"><Ico :n="v" /></button>
        </div>
        <button class="bare more">. . .</button>
        <div class="wellwrap">
          <div class="wells">
            <h4>Rows</h4>
            <div class="well"><div class="pill">CustomerName<Ico n="wide" /><Ico n="x" /></div></div>
            <h4>Columns</h4>
            <div class="well empty">Add data fields here</div>
            <h4>Values</h4>
            <div class="well"><div v-for="v in values" :key="v" class="pill">{{ v }}<Ico n="wide" /><Ico n="x" /></div></div>
            <h4 class="drill">Drill through</h4>
            <div class="cross"><span>Cross-report</span><button class="toggle"><i></i>Off</button></div>
          </div>
          <div class="vscroll"></div>
        </div>
      </aside>

      <aside class="data">
        <div class="phead"><h2>Data</h2><button class="bare" aria-label="Collapse"><Ico n="dright" /></button></div>
        <label class="dsearch"><Ico n="lens2" /><input type="text" placeholder="Search" aria-label="Search fields" /></label>
        <div class="listwrap">
          <div class="list">
            <label class="frow first"><span class="tw"></span><input type="checkbox" /><span class="fi"></span><span class="fn">Region</span></label>
            <div class="frow tbl"><Ico n="wide" /><Ico n="tablecheck" class="tc" /><span>SalesData</span></div>
            <label v-for="f in fields" :key="f.name" class="frow">
              <span class="tw"><Ico v-if="f.open" n="right" /></span>
              <input type="checkbox" :checked="f.on" />
              <span class="fi"><Ico v-if="f.icon" :n="f.icon" /></span>
              <span class="fn">{{ f.name }}</span>
            </label>
          </div>
          <div class="dscroll"></div>
        </div>
      </aside>
    </main>

    <footer class="status">
      <span>Page 1 of 1</span>
      <div class="zoom">
        <button class="bare">-</button>
        <input type="range" min="0" max="100" value="33" aria-label="Zoom" />
        <button class="bare pl">+</button>
        <span>71%</span>
        <button class="bare" aria-label="Fit to page"><Ico n="fit" /></button>
      </div>
    </footer>
  </div>
</template>

<style>
html, body { margin: 0; height: 100%; }
</style>

<style scoped>
* { box-sizing: border-box; }
.app { height: 100vh; display: flex; flex-direction: column; overflow: hidden; background: #f3f2f1; color: #252423; font: 14px/20px "Open Sans", "Noto Sans", sans-serif; }
button, input, select { font: inherit; color: inherit; }
button { border: 0; background: none; padding: 0; cursor: pointer; white-space: nowrap; }
h1, h2, h3, h4 { margin: 0; }
svg { flex: none; display: block; overflow: visible; }

.titlebar { position: relative; flex: none; height: 43px; background: #3b3a39; color: #fff; display: flex; align-items: center; gap: 19px; padding: 0 19px 0 20px; }
.doc { display: flex; align-items: center; gap: 12px; margin-left: -7px; padding-top: 4px; }
.topsearch { position: absolute; left: 50%; top: 6px; width: 500px; margin-left: -152px; height: 30px; background: #d2d2d0; border-radius: 3px; display: flex; align-items: center; gap: 16px; padding-left: 21px; }
.topsearch input { flex: 1; min-width: 0; border: 0; outline: 0; background: none; font-size: 16px; padding: 0; }
.topsearch input::placeholder { color: #2a5c55; opacity: 1; }
.winctl { margin-left: auto; display: flex; align-items: center; gap: 41px; }
.signin { display: flex; align-items: center; gap: 12px; }

.ribbon { position: relative; z-index: 3; flex: none; background: #fafafa; box-shadow: 0 1px 7px rgba(0, 0, 0, .35); }
.tabs { height: 38px; display: flex; padding: 0 6px 0 7px; }
.tab { padding: 0 21px; font-size: 16px; color: #201f1e; }
.tab:first-child { margin-right: 6px; }
.tab span { display: flex; align-items: center; height: 38px; border-bottom: 3px solid transparent; border-top: 3px solid transparent; }
.tab.active { font-weight: 600; }
.tab.active span { border-bottom-color: #117865; }
.tab.ctx { background: #fff; color: #117865; font-weight: 600; padding: 0 19px; margin-right: 5px; }
.share { margin: 5px 0 3px auto; width: 105px; border-radius: 5px; background: #117865; color: #fff; display: flex; align-items: center; justify-content: center; gap: 8px; }
.groups { display: flex; height: 119px; padding-top: 6px; }
.group { flex: none; height: 112px; display: flex; flex-direction: column; border-right: 1px solid #d2d0ce; }
.clip { width: 200px; }
.cmds { flex: 1; padding-top: 7px; display: flex; justify-content: center; }
.clip .cmds { justify-content: flex-start; padding-left: 9px; }
.cmd { flex: none; display: flex; flex-direction: column; align-items: center; }
.clip .cmd { width: 52px; }
.cmd > svg { margin-bottom: 3px; }
.cmd span { height: 20px; display: flex; align-items: center; gap: 3px; }
.cmd .sd { margin-top: 4px; }
.off { color: #bebbb8; }
.stack { display: flex; flex-direction: column; padding-left: 4px; }
.stack button { height: 30px; display: flex; align-items: center; gap: 5px; }
.stack button:first-child { margin-top: -6px; }
.gname { text-align: center; font-size: 12px; line-height: 16px; color: #3b3a39; margin-bottom: -1px; }
.collapse { margin: auto 5px 8px auto; }

.main { flex: 1; min-height: 0; display: flex; }
.rail { flex: none; width: 51px; border-right: 1px solid #d8d6d4; display: flex; flex-direction: column; }
.rail button { height: 50px; display: flex; align-items: center; justify-content: center; border-left: 3px solid transparent; padding-right: 2px; }
.rail .active { border-left-color: #117865; }
.center { flex: 1; min-width: 0; display: flex; flex-direction: column; }
.work { flex: 1; min-height: 0; display: flex; }
.canvas { flex: 1; min-width: 0; background: #628166; overflow: hidden; padding-top: 13px; }
.report { width: 82.5%; margin: 0 auto; padding: 0 11px 0 8px; background: #5c7a60; box-shadow: 0 0 14px 3px rgba(190, 200, 190, .55); }
.kpis { display: grid; grid-template-columns: repeat(5, 1fr); gap: 13px; height: 128px; }
.kpi { background: #628166; box-shadow: 6px 6px 10px rgba(50, 68, 52, .5); display: flex; flex-direction: column; align-items: center; padding-top: 34px; }
.kpi strong { font: 400 44px/52px Roboto, sans-serif; color: #252423; }
.kpi span { font-size: 13px; line-height: 24px; color: #111; }
.body { display: grid; grid-template-columns: 426fr 288fr 379fr; gap: 0 12px; padding: 8px 0 1px; height: 511px; }
.tile { background: #7aab79; box-shadow: 6px 6px 10px rgba(50, 68, 52, .5); min-width: 0; }
.colA, .colB, .colC { display: flex; flex-direction: column; min-width: 0; min-height: 0; }
.colB { gap: 13px; }
.duo { display: grid; grid-template-columns: 202fr 213fr; gap: 11px; height: 138px; margin: 1px 0 9px; }
.narrow { min-width: 0; display: flex; flex-direction: column; gap: 10px; }
.headline { height: 38px; background: #8aa38b; box-shadow: 6px 6px 10px rgba(50, 68, 52, .5); font-size: 20px; line-height: 37px; font-weight: 700; padding-left: 5px; white-space: nowrap; }
.slicer { flex: 1; padding: 3px 8px 0 9px; }
.shead { display: flex; align-items: center; justify-content: space-between; height: 18px; font: 13px/18px Roboto, sans-serif; color: #2c3a2d; padding: 0 2px; }
.shead svg { color: #476348; }
.shead i { display: flex; gap: 7px; align-items: center; }
.dd { position: relative; height: 29px; margin-top: 4px; }
.dd select { appearance: none; width: 100%; height: 100%; border: 2px solid #a9c9a9; background: none; padding: 0 4px; border-radius: 0; }
.dd svg { position: absolute; right: 6px; top: 10px; }
.regionbox { position: relative; border: 2px solid #a9cbaa; padding: 2px 9px 0 8px; }
.vhead { position: absolute; right: -1px; bottom: 100%; margin-bottom: 3px; display: flex; gap: 5px; z-index: 2; }
.vhead button { width: 30px; height: 29px; background: #fff; border: 1px solid #d8d6d4; display: flex; align-items: center; justify-content: center; }
.chips { display: grid; grid-template-columns: repeat(3, 55px); gap: 3px 2px; margin: 1px 0 0 14px; }
.chips button { height: 53px; background: #b3b3b3; border: 1px solid #707a70; font-size: 11px; font-weight: 700; }
.chips .on { background: #e8e8e8; }
.fill { flex: 1; min-height: 0; }
.chart { width: 100%; height: auto; }
.vt { font: 16px Roboto, sans-serif; fill: #252b25; }
.at { font: 13px Roboto, sans-serif; fill: #252b25; text-anchor: middle; }
.ax { font: 11px "Open Sans", sans-serif; fill: #3f5341; }
.dark { fill: #263027; }
.lg { font: 12px "Open Sans", sans-serif; fill: #354737; }
.lt { font: 600 12px "Open Sans", sans-serif; fill: #2f3d30; }
.grid path { fill: none; stroke: #b4cbb2; stroke-dasharray: 1 4; }
.trendline { fill: none; stroke: #333; stroke-width: 2.5; stroke-linecap: round; }
.dates { height: 94px; padding: 4px 11px 0; }
.dhead { display: flex; justify-content: space-between; align-items: center; font: 10px/14px Roboto, sans-serif; padding-left: 1px; }
.dhead svg { color: #476348; width: 9px; }
.drow { display: flex; gap: 4px; margin-top: 4px; }
.drow label { width: 86px; height: 25px; border: 1px solid #c3dac2; display: flex; align-items: center; padding: 0 3px 0 7px; }
.drow input { flex: 1; min-width: 0; border: 0; background: none; padding: 0; font-size: 11px; }
.range { position: relative; height: 22px; margin: 7px -3px 0 3px; background: linear-gradient(#605e5c, #605e5c) center / calc(100% - 8px) 2px no-repeat; }
.range input { position: absolute; inset: 0; width: 100%; height: 22px; margin: 0; appearance: none; background: none; pointer-events: none; }
.range input::-webkit-slider-thumb { appearance: none; width: 22px; height: 22px; border-radius: 50%; background: #fff; border: 1px solid #605e5c; pointer-events: auto; }
.matrix { position: relative; flex: 1; min-height: 0; margin-top: 9px; border: 1px solid #b6c4b7; background: #628166; padding: 4px; display: flex; gap: 8px; }
.handle { position: absolute; width: 12px; height: 12px; border: 0 solid #958f96; }
.tl { left: -2px; top: -2px; border-width: 4px 0 0 4px; }
.tr { right: -2px; top: -2px; border-width: 4px 4px 0 0; }
.bl { left: -2px; bottom: -2px; border-width: 0 0 4px 4px; }
.br { right: -2px; bottom: -2px; border-width: 0 4px 4px 0; }
.tm, .bm { left: 48%; width: 15px; height: 4px; background: #958f96; }
.tm { top: -2px; }
.bm { bottom: -2px; }
.ml, .mr { top: 48%; width: 4px; height: 15px; background: #958f96; }
.ml { left: -2px; }
.mr { right: -2px; }
table { flex: 1; height: 390px; border-collapse: separate; border-spacing: 0; table-layout: fixed; font-size: 11px; line-height: 14px; background: #fff; }
.c1 { width: 91px; }
.c2 { width: 77px; }
.c3 { width: 73px; }
th { height: 30px; background: #333; color: #fff; font-weight: 400; text-align: left; vertical-align: top; padding: 5px 0 0 4px; border-bottom: 1px solid #2b88d8; white-space: nowrap; position: relative; }
.sorted::after { content: ""; position: absolute; left: 5px; bottom: 3px; border: 4px solid transparent; border-bottom-color: #fff; border-top: 0; }
td { padding: 0 4px; text-align: right; font-weight: 600; border-right: 1px solid #dcdcdc; border-bottom: 1px solid #e3e3e3; }
td:first-child { text-align: left; font-weight: 400; border-right: 1px solid #6ab0f0; }
td:last-child { border-right: 0; }
tbody tr:nth-child(even) { background: #ececec; }
.cutrow td { height: 7px; border-bottom: 0; }
tfoot td { height: 21px; background: #252423; color: #fff; font-weight: 700; border-color: #333; }
tfoot td:first-child { font-weight: 700; }
.mscroll { width: 8px; border-radius: 4px; background: #a9bfab; }
.mscroll i { display: block; height: 12px; border-radius: 4px; background: #5d7a60; }

.filters { flex: none; width: 41px; background: #fff; display: flex; flex-direction: column; align-items: center; padding-top: 16px; border-left: 1px solid #ccc; }
.filters > svg { margin: 19px 0 10px 5px; }
.filters h2 { writing-mode: vertical-rl; font-size: 18px; line-height: 20px; font-weight: 600; margin-left: 2px; }
.pages { flex: none; height: 44px; display: flex; align-items: center; }
.view { width: 30px; height: 35px; padding: 0 3px; border-bottom: 3px solid #117865; align-self: flex-start; margin: 3px 0 0 13px; }
.phone { margin: 0 26px 6px 31px; }
.arrow { margin: 0 22px 2px 0; }
.arrow + .arrow { margin-right: 9px; }
.ptab { width: 94px; height: 44px; background: #fff; border-left: 1px solid #999; border-bottom: 5px solid #117865; padding-top: 5px; }
.padd { width: 49px; height: 44px; background: #117865; display: flex; align-items: center; justify-content: center; padding-bottom: 3px; }

.viz { flex: none; width: 226px; border-left: 1px solid #dcdad8; display: flex; flex-direction: column; }
.phead { display: flex; align-items: center; justify-content: space-between; padding: 12px 10px 0 10px; height: 38px; }
.phead h2 { font-size: 17px; line-height: 26px; font-weight: 600; }
.viz h3 { font-size: 14px; font-weight: 600; margin: 10px 10px 0; line-height: 20px; }
.modes { display: flex; justify-content: space-between; padding: 4px 10px 0; }
.modes button { width: 40px; height: 40px; border-radius: 3px; display: flex; align-items: center; justify-content: center; }
.modes .on { background: #d2d0ce; }
.notch { padding-left: 20px; height: 16px; display: flex; align-items: flex-end; border-bottom: 1px solid #8a8886; }
.notch svg { margin-bottom: -1px; }
.gallery { display: grid; grid-template-columns: repeat(6, 35px); grid-auto-rows: 35px; padding: 8px 0 0 8px; }
.gallery button { display: flex; align-items: center; justify-content: center; }
.gallery .on { outline: 1px solid #222; outline-offset: -3px; }
.more { align-self: flex-start; margin: 0 0 0 14px; line-height: 22px; height: 24px; font-size: 16px; font-weight: 600; }
.wellwrap { flex: 1; min-height: 0; display: flex; border-top: 1px solid #dcdad8; margin: 16px 0 10px; }
.wells { flex: 1; min-width: 0; overflow: hidden; padding-left: 5px; }
.wells h4 { font-weight: 400; padding: 11px 10px 6px; line-height: 20px; }
.wells h4 + .well { margin-bottom: 2px; }
.well { border: 1px dashed #c8c6c4; background: #fff; padding: 4px 3px 11px; display: flex; flex-direction: column; gap: 3px; }
.well.empty { height: 36px; padding: 7px 13px; }
.pill { height: 28px; border: 1px solid #c8c6c4; border-radius: 2px; background: #edebe9; display: flex; align-items: center; gap: 7px; padding: 0 4px; white-space: nowrap; }
.pill svg:first-of-type { margin-left: auto; }
.wells .drill { font-weight: 600; color: #484644; padding-bottom: 11px; padding-top: 10px; }
.cross { display: flex; justify-content: space-between; padding: 0 19px 0 10px; }
.toggle { width: 40px; height: 20px; border: 1px solid #605e5c; border-radius: 10px; background: #fff; font-size: 11px; display: flex; align-items: center; gap: 3px; padding: 0 4px; }
.toggle i { width: 11px; height: 11px; border-radius: 50%; background: #605e5c; }
.vscroll { width: 7px; height: 283px; margin-top: 2px; border-radius: 4px; background: #8a8886; }

.data { flex: none; width: 225px; border-left: 1px solid #dcdad8; display: flex; flex-direction: column; }
.data .phead { padding-right: 9px; }
.dsearch { margin: 19px 5px 9px 5px; height: 31px; flex: none; background: #fff; border: 1px solid #d2d0ce; border-bottom-color: #8a8886; border-radius: 4px; display: flex; align-items: center; gap: 9px; padding-left: 14px; }
.dsearch input { flex: 1; min-width: 0; border: 0; outline: 0; padding: 0; background: none; font-size: 16px; }
.dsearch input::placeholder { color: #757371; opacity: 1; }
.listwrap { flex: 1; min-height: 0; display: flex; margin-bottom: 10px; }
.list { flex: 1; min-width: 0; overflow: hidden; }
.frow { height: 30px; display: flex; align-items: center; padding-left: 38px; }
.first { margin-top: -8px; }
.tbl { padding-left: 16px; gap: 5px; position: relative; }
.tbl .tc { margin-top: 6px; }
.tbl > span { margin-left: -4px; }
.tw { width: 17px; flex: none; }
.frow input { appearance: none; flex: none; margin: 0; width: 15px; height: 15px; border: 1px solid #757371; border-radius: 2px; position: relative; }
.frow input:checked { background: #117865; border-color: #117865; }
.frow input:checked::after { content: ""; position: absolute; left: 3px; top: 3px; width: 7px; height: 3px; border: solid #fff; border-width: 0 0 1px 1px; transform: rotate(-45deg); }
.fi { width: 16px; flex: none; margin: 0 6px 0 10px; }
.fn { overflow: hidden; text-overflow: ellipsis; white-space: nowrap; }
.dscroll { flex: none; width: 10px; margin: 109px 4px 0 0; background: #8a8886; }

.status { flex: none; height: 28px; border-top: 1px solid #dcdad8; display: flex; align-items: center; justify-content: space-between; padding: 3px 22px 0 5px; color: #3b3a39; }
.zoom { display: flex; align-items: center; gap: 7px; color: #605e5c; font-size: 14px; }
.zoom .bare { font-weight: 700; }
.zoom .pl { font-size: 17px; }
.zoom > span { margin: 0 17px 0 8px; }
.zoom input { appearance: none; width: 125px; height: 16px; margin: 0; background: linear-gradient(#605e5c, #605e5c) center / 100% 1px no-repeat, linear-gradient(#605e5c, #605e5c) center / 1px 7px no-repeat; }
.zoom input::-webkit-slider-thumb { appearance: none; width: 5px; height: 13px; background: #605e5c; }
</style>
